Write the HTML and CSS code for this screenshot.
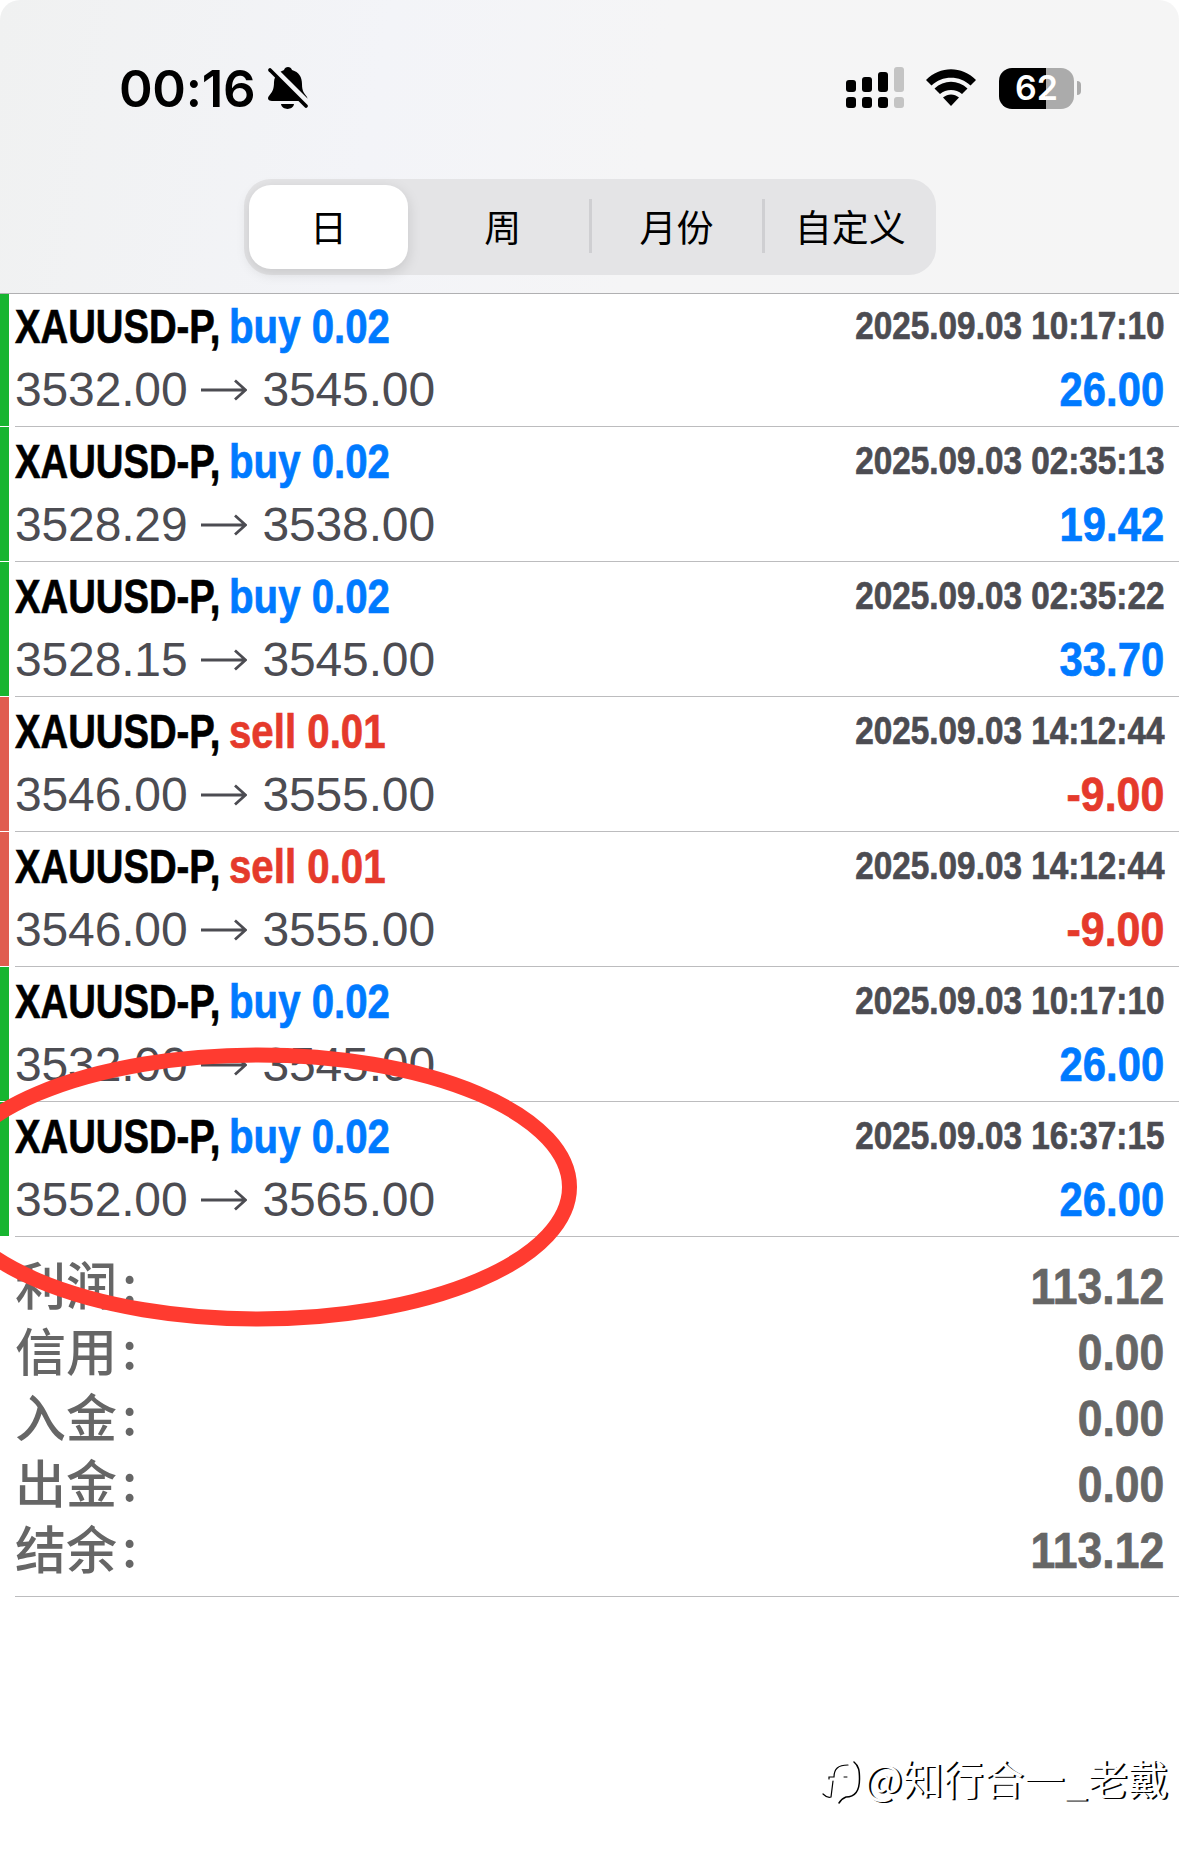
FILE: index.html
```
<!DOCTYPE html>
<html lang="zh-CN">
  <head>
    <meta charset="UTF-8" />
    <meta name="viewport" content="width=device-width, initial-scale=1.0" />
    <title>History</title>
    <link rel="stylesheet" href="styles.css">
  </head>
  <body>
    <div class="header">
      <div class="status-bar">
        <div class="clock">00:16</div>
        <svg class="bell" width="42" height="44" viewBox="0 0 42 44">
          <path d="M12 7 C14 5 16 4.500 17 4 C18 0 24 0 25 4 C32 6 35 11 35 18 C35 25 37 27 40 31 C41 34 39.500 35 38 35 L5 35 C1 35 0 32 2 30 C5 26 7 24 7 16 C7 12 9 9 12 7 Z" />
          <path d="M14 38 H27 C26 44.500 15 44.500 14 38 Z" />
          <path d="M4 1 L42 39" stroke="#f3f4f6" stroke-width="7" />
          <path d="M3 4 L39 40" stroke="#000" stroke-width="3.800" stroke-linecap="round" />
        </svg>
        <svg class="signal" width="58" height="42" viewBox="0 0 58 42">
          <rect x="0" y="13" width="10" height="12" rx="3" />
          <rect x="16" y="10" width="10" height="15" rx="3" />
          <rect x="32" y="5" width="10" height="20" rx="3" />
          <rect x="0" y="30" width="10" height="11" rx="3" />
          <rect x="16" y="30" width="10" height="11" rx="3" />
          <rect x="32" y="30" width="10" height="11" rx="3" />
          <g fill="#c4c4c4">
            <rect x="48" y="0" width="10" height="25" rx="3" />
            <rect x="48" y="30" width="10" height="11" rx="3" />
          </g>
        </svg>
        <svg class="wifi" width="50" height="38" viewBox="0 0 50 38">
          <path d="M0 11 C14 -3.500 36 -3.500 50 11 L44.500 16.500 C34 6 16 6 5.500 16.500 Z" />
          <path d="M8.500 19.500 C18 10.500 32 10.500 41.500 19.500 L36 25 C30 19.500 20 19.500 14 25 Z" />
          <path d="M17 28.500 C22 24.500 28 24.500 33 28.500 L25 37 Z" />
        </svg>
        <div class="battery">62</div>
        <div class="battery-tip"></div>
      </div>

      <div class="segments">
        <div class="segment active">日</div>
        <div class="segment">周</div>
        <div class="segment divided">月份</div>
        <div class="segment divided">自定义</div>
      </div>
    </div>

    <svg class="defs" width="0" height="0">
      <symbol id="arrow" viewBox="0 0 46 22">
        <path d="M0 11 H44 M34 1.500 L44.500 11 L34 20.500" fill="none" stroke="#4c4c52" stroke-width="2.800" />
      </symbol>
    </svg>

    <div class="trades">
      <div class="trade buy">
        <div class="line">
          <span class="symbol">XAUUSD-P,</span><span class="side">buy 0.02</span>
          <span class="date">2025.09.03 10:17:10</span>
        </div>
        <div class="line">
          <span class="price">3532.00</span><svg class="arrow"><use href="#arrow" /></svg><span class="price">3545.00</span>
          <span class="amount">26.00</span>
        </div>
      </div>
      <div class="trade buy">
        <div class="line">
          <span class="symbol">XAUUSD-P,</span><span class="side">buy 0.02</span>
          <span class="date">2025.09.03 02:35:13</span>
        </div>
        <div class="line">
          <span class="price">3528.29</span><svg class="arrow"><use href="#arrow" /></svg><span class="price">3538.00</span>
          <span class="amount">19.42</span>
        </div>
      </div>
      <div class="trade buy">
        <div class="line">
          <span class="symbol">XAUUSD-P,</span><span class="side">buy 0.02</span>
          <span class="date">2025.09.03 02:35:22</span>
        </div>
        <div class="line">
          <span class="price">3528.15</span><svg class="arrow"><use href="#arrow" /></svg><span class="price">3545.00</span>
          <span class="amount">33.70</span>
        </div>
      </div>
      <div class="trade sell">
        <div class="line">
          <span class="symbol">XAUUSD-P,</span><span class="side">sell 0.01</span>
          <span class="date">2025.09.03 14:12:44</span>
        </div>
        <div class="line">
          <span class="price">3546.00</span><svg class="arrow"><use href="#arrow" /></svg><span class="price">3555.00</span>
          <span class="amount">-9.00</span>
        </div>
      </div>
      <div class="trade sell">
        <div class="line">
          <span class="symbol">XAUUSD-P,</span><span class="side">sell 0.01</span>
          <span class="date">2025.09.03 14:12:44</span>
        </div>
        <div class="line">
          <span class="price">3546.00</span><svg class="arrow"><use href="#arrow" /></svg><span class="price">3555.00</span>
          <span class="amount">-9.00</span>
        </div>
      </div>
      <div class="trade buy">
        <div class="line">
          <span class="symbol">XAUUSD-P,</span><span class="side">buy 0.02</span>
          <span class="date">2025.09.03 10:17:10</span>
        </div>
        <div class="line">
          <span class="price">3532.00</span><svg class="arrow"><use href="#arrow" /></svg><span class="price">3545.00</span>
          <span class="amount">26.00</span>
        </div>
      </div>
      <div class="trade buy">
        <div class="line">
          <span class="symbol">XAUUSD-P,</span><span class="side">buy 0.02</span>
          <span class="date">2025.09.03 16:37:15</span>
        </div>
        <div class="line">
          <span class="price">3552.00</span><svg class="arrow"><use href="#arrow" /></svg><span class="price">3565.00</span>
          <span class="amount">26.00</span>
        </div>
      </div>
    </div>

    <div class="summary">
      <div class="total"><span class="label">利润<i>:</i></span><span class="value">113.12</span></div>
      <div class="total"><span class="label">信用<i>:</i></span><span class="value">0.00</span></div>
      <div class="total"><span class="label">入金<i>:</i></span><span class="value">0.00</span></div>
      <div class="total"><span class="label">出金<i>:</i></span><span class="value">0.00</span></div>
      <div class="total"><span class="label">结余<i>:</i></span><span class="value">113.12</span></div>
    </div>

    <svg class="circle" width="600" height="300" viewBox="0 0 600 300">
      <ellipse cx="258" cy="147" rx="311.500" ry="132" fill="none" stroke="#ff3b30" stroke-width="15" />
    </svg>

    <div class="watermark">
      <svg width="42" height="48" viewBox="0 0 42 48" fill="none" stroke="#000" stroke-linecap="round">
        <path d="M7 20 V18 H12 C12 10 16 6 26 6" stroke-width="1.200" />
        <path d="M32 3 C37 7 37.500 12 37.500 20 C37.500 32 33 38 24 38 C21 39 19 41 17 44" stroke-width="1.500" />
        <path d="M11 22 L9 38 C6 39 3 37 1 35" stroke-width="1.200" />
        <path d="M22 18 H25" stroke-width="1" />
      </svg>
      <span>@知行合一_老戴</span>
    </div>
  </body>
</html>
```

FILE: styles.css
```
* {
  box-sizing: border-box;
}
body {
  margin: 0;
  width: 1179px;
  height: 1851px;
  position: relative;
  overflow: hidden;
  background-color: #fff;
  font-family: "Liberation Sans", "Noto Sans CJK SC", sans-serif;
}
.header {
  height: 294px;
  border-bottom: 1px solid #b0b0b2;
  border-radius: 20px 20px 0 0;
  background: linear-gradient(100deg, #f0f1f1 0%, #f3f4f8 32%, #f5f5f6 55%, #f5f5f5 100%);
}
.status-bar {
  display: flex;
  align-items: center;
  height: 179px;
  padding: 0 0 3px 119px;
}
.clock {
  width: 148px;
  font-family: Inter, sans-serif;
  font-size: 51px;
  font-weight: 600;
  letter-spacing: -0.3px;
  white-space: nowrap;
}
.signal {
  margin-left: 537px;
}
.wifi {
  margin-left: 22px;
}
.battery {
  width: 75px;
  height: 41px;
  margin-left: 23px;
  border-radius: 13px;
  background: linear-gradient(90deg, #000 0 47px, #ababab 47px);
  color: #fff;
  font-family: Inter, sans-serif;
  font-size: 34px;
  font-weight: 600;
  line-height: 40px;
  text-align: center;
}
.battery-tip {
  width: 4px;
  height: 14px;
  margin-left: 3px;
  border-radius: 0 7px 7px 0;
  background-color: #ababab;
}

.segments {
  display: flex;
  width: 692px;
  height: 96px;
  margin-left: 244px;
  border-radius: 27px;
  background-color: #e4e4e6;
}
.segment {
  display: flex;
  align-items: center;
  justify-content: center;
  width: 172px;
  padding-bottom: 2px;
  font-family: "Noto Sans CJK SC", sans-serif;
  font-size: 37px;
}
.segment.active {
  width: 159px;
  margin: 6px 9px 6px 5px;
  border-radius: 22px;
  background-color: #fff;
  box-shadow: 0 4px 14px rgba(0, 0, 0, 0.13);
}
.segment.divided {
  width: 174px;
}
.segment.divided::before {
  content: "";
  width: 3px;
  height: 54px;
  margin-right: auto;
  background-color: #cfcfd2;
}
.segment.divided::after {
  content: "";
  width: 1px;
  margin-left: auto;
}

.defs {
  display: block;
}
.trade {
  height: 135px;
  padding: 4px 15px 0 6px;
  border-left: 9px solid #17b530;
  position: relative;
}
.trade:first-child {
  height: 133px;
  padding-top: 2px;
}
.trade.sell {
  border-left-color: #e05d50;
}
/* separator: white over the colour bar, grey under the text */
.trade::after {
  content: "";
  position: absolute;
  left: -9px;
  right: 0;
  bottom: 0;
  height: 1px;
  background: linear-gradient(90deg, #fff 15px, #bcbcbe 15px);
}
.line {
  display: flex;
  align-items: center;
  height: 62px;
  font-size: 48px;
  line-height: 62px;
  white-space: nowrap;
}
.line + .line {
  margin-top: 1px;
}
/* condensed bold faces */
.symbol,
.side,
.date,
.amount,
.value {
  font-weight: bold;
  transform-origin: left;
  -webkit-text-stroke: 0.7px currentColor;
}
.symbol {
  width: 214px;
  transform: scaleX(0.797);
}
.side {
  color: #007aff;
  transform: scaleX(0.838);
}
.date,
.amount,
.value {
  margin-left: auto;
  transform-origin: right;
}
.date {
  padding-bottom: 2px;
  color: #4c4c52;
  font-size: 38.5px;
  transform: scaleX(0.865);
}
.amount {
  color: #007aff;
  transform: scaleX(0.87);
}
.sell .side,
.sell .amount {
  color: #e53a2b;
}
.sell .amount {
  transform: scaleX(0.895);
}
.price {
  color: #4c4c52;
  letter-spacing: -0.15px;
}
.arrow {
  width: 46px;
  height: 22px;
  margin: 0 15px 0 14px;
}

.summary {
  height: 360px;
  margin-left: 15px;
  padding: 17px 15px 0 0;
  border-bottom: 1px solid #bcbcbe;
}
.total {
  display: flex;
  align-items: center;
  height: 66px;
  color: #666;
  white-space: nowrap;
}
.label {
  display: flex;
  padding-bottom: 7px;
  font-family: "Noto Sans CJK SC", sans-serif;
  font-size: 51px;
  font-weight: 500;
  line-height: 59px;
}
.label i {
  margin: -2px 0 2px 5px;
  font-style: normal;
}
.value {
  font-size: 50px;
  transform: scaleX(0.89);
}

/* hand-drawn mark over the last trade */
.circle {
  position: absolute;
  left: 0;
  top: 1040px;
}

.watermark {
  position: absolute;
  right: 11px;
  top: 1748px;
  display: flex;
  align-items: center;
  color: #fff;
  font-family: "Noto Sans CJK SC", sans-serif;
  font-size: 40.5px;
  line-height: 60px;
  text-shadow: 2px 1px 0 #000;
}
.watermark svg {
  margin: 9px 0 0 0;
}
```
